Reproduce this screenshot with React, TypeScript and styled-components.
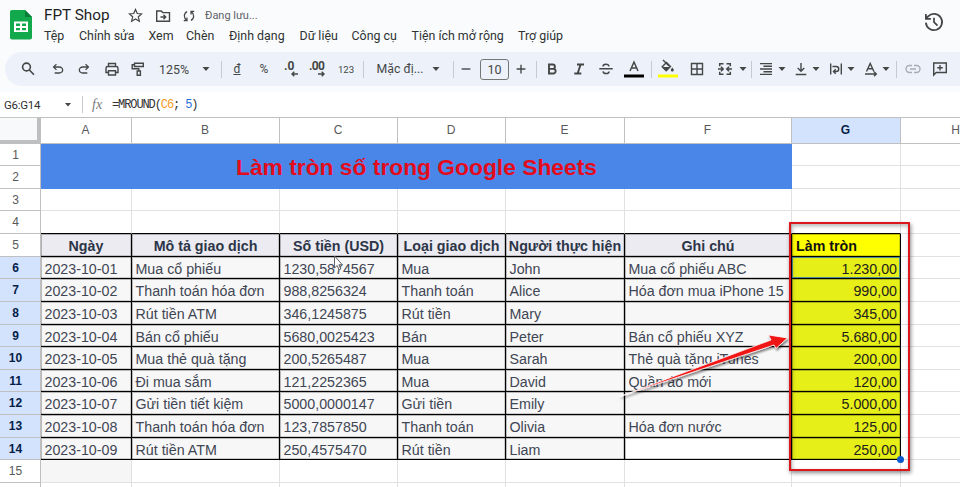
import React from 'react'
import styled, { createGlobalStyle } from 'styled-components'

const GlobalStyle = createGlobalStyle`
  * {
    box-sizing: border-box;
  }

  body {
    margin: 0;
    background: #fff;
    overflow: hidden;
  }
`

const Page = styled.div`
  width: 960px;
  height: 487px;
  overflow: hidden;
  background: #fff;
  color: #444746;
  font-family: Roboto, 'Liberation Sans', sans-serif;
`

const TopArea = styled.header`
  height: 92px;
  background: #f9fbfd;
`

const TitleBar = styled.div`
  display: flex;
  height: 52px;
  padding: 0 16px 0 10px;
`

const Logo = styled.svg`
  width: 22px;
  height: 30px;
  margin-top: 10px;
`

const TitleColumn = styled.div`
  flex: 1;
  margin-left: 12px;
`

const NameRow = styled.div`
  display: flex;
  align-items: center;
  height: 26px;
  padding-top: 5px;
`

const DocName = styled.div`
  width: 84px;
  margin-top: -2px;
  color: #1f1f1f;
  font-size: 15.3px;
  line-height: 20px;
`

const NameIcon = styled.span`
  display: flex;
  width: 27px;
`

const Saving = styled.span`
  margin-left: -4px;
  color: #5f6368;
  font-size: 11px;
`

const Menu = styled.nav`
  display: flex;
  height: 20px;
  line-height: 20px;
`

const MenuItem = styled.span<{ $width: number }>`
  width: ${({ $width }) => $width}px;
  flex: none;
  color: #303332;
  font-size: 12.4px;
  white-space: nowrap;
`

const HistoryIcon = styled.span`
  display: flex;
  align-items: center;
  height: 44px;
`

const Toolbar = styled.div`
  display: flex;
  align-items: center;
  height: 34px;
  margin-left: 5px;
  border-radius: 17px 0 0 17px;
  background: #edf2fa;
`

const Tool = styled.span<{ $gap: number; $width?: number; $size?: number; $faded?: boolean }>`
  display: flex;
  flex: none;
  justify-content: center;
  align-items: center;
  width: ${({ $width }) => $width ?? 16}px;
  margin-left: ${({ $gap }) => $gap}px;
  font-size: ${({ $size }) => $size ?? 12}px;
  white-space: nowrap;
  opacity: ${({ $faded }) => ($faded ? 0.4 : 1)};
`

const Caret = styled.span<{ $gap: number }>`
  flex: none;
  width: 8px;
  height: 4px;
  margin-left: ${({ $gap }) => $gap}px;
  background: #444746;
  clip-path: polygon(6% 0, 94% 0, 50% 100%);
`

const Divider = styled.span<{ $gap: number }>`
  flex: none;
  width: 1px;
  height: 17px;
  margin-left: ${({ $gap }) => $gap}px;
  background: #c7cad0;
`

const FontSize = styled.span`
  flex: none;
  width: 29px;
  height: 21px;
  margin-left: 9px;
  border: 1px solid #747775;
  border-radius: 3px;
  font-size: 12.5px;
  line-height: 19px;
  text-align: center;
`

const FormulaBar = styled.div`
  display: flex;
  align-items: center;
  height: 25px;
  padding-left: 4px;
`

const NameBox = styled.span`
  width: 51px;
  color: #303030;
  font-size: 11.5px;
  letter-spacing: -0.3px;
`

const Fx = styled.span`
  width: 20px;
  margin-left: 9px;
  color: #777a7d;
  font-family: 'Liberation Serif', serif;
  font-size: 14px;
  font-style: italic;
`

const Formula = styled.code`
  color: #333;
  font-family: 'Liberation Mono', monospace;
  font-size: 12px;
  letter-spacing: -1.1px;
  white-space: pre;
`

const Reference = styled.span`
  color: #f29b1d;
`

const NumberLiteral = styled.span`
  color: #2a6fd6;
`

const SheetArea = styled.main`
  position: relative;
`

const Sheet = styled.div`
  display: grid;
  grid-template-columns: 41px 91px 148px 118px 108px 119px 167px 109px 111px;
  grid-template-rows: 27px 22px 23px 22px 23px 23px 22px 23px 23px 22px 23px 22px 23px 23px 22px 23px 22px;
  font-family: 'Liberation Sans', sans-serif;
`

const Corner = styled.div`
  border-top: 1px solid #c4c7c5;
  border-right: 4px solid #bdbfc1;
  border-bottom: 4px solid #bdbfc1;
  background: #f8f9fa;
`

const ColumnHead = styled.div<{ $active: boolean }>`
  display: flex;
  justify-content: center;
  align-items: center;
  padding: 0 1px 1px 0;
  border: solid #c0c0c0;
  border-width: 1px 1px 1px 0;
  background: ${({ $active }) => ($active ? '#d3e3fd' : '#fff')};
  color: ${({ $active }) => ($active ? '#041e49' : '#575a5a')};
  font-size: 12px;
  font-weight: ${({ $active }) => ($active ? 700 : 400)};
`

const RowHead = styled.div<{ $active: boolean }>`
  display: flex;
  justify-content: center;
  align-items: center;
  padding-right: 9px;
  border: solid #c0c0c0;
  border-width: 0 1px 1px 0;
  background: ${({ $active }) => ($active ? '#d3e3fd' : '#fff')};
  color: ${({ $active }) => ($active ? '#041e49' : '#575a5a')};
  font-size: 12px;
  font-weight: ${({ $active }) => ($active ? 700 : 400)};
`

const Banner = styled.div`
  display: flex;
  grid-row: span 2;
  grid-column: span 6;
  justify-content: center;
  align-items: center;
  padding-top: 1px;
  background: #4a86e8;
  color: #e30b1c;
  font-size: 22.8px;
  font-weight: 700;
  white-space: nowrap;
`

const EmptyCell = styled.div<{ $ruled?: boolean; $tinted?: boolean }>`
  border: solid #e1e1e1;
  border-width: 0 1px 1px 0;
  border-bottom-color: ${({ $ruled }) => ($ruled ? '#000' : '#e1e1e1')};
  background: ${({ $tinted }) => ($tinted ? '#f6f6f6' : '#fff')};
`

// The soft second line keeps the black rules a little heavier than a hairline
const RuledCell = styled.div`
  border: solid #000;
  border-width: 0 1px 1px 0;
  box-shadow: inset -0.5px -0.5px 0 rgba(0, 0, 0, 0.35), inset 1px 1px 0 rgba(0, 0, 0, 0.25);
  font-size: 14.25px;
  line-height: 24px;
  white-space: nowrap;
`

const HeadCell = styled(RuledCell)<{ $yellow: boolean }>`
  padding-left: ${({ $yellow }) => ($yellow ? 4 : 0)}px;
  background: ${({ $yellow }) => ($yellow ? '#ffff00' : '#ebebf1')};
  color: ${({ $yellow }) => ($yellow ? '#111' : '#2d3548')};
  font-weight: 700;
  line-height: 25px;
  text-align: ${({ $yellow }) => ($yellow ? 'left' : 'center')};
`

const DataCell = styled(RuledCell)<{ $plain?: boolean }>`
  padding-left: 3.5px;
  background: ${({ $plain }) => ($plain ? '#fff' : '#f7f7f7')};
  color: #3f4654;
`

const ResultCell = styled(RuledCell)<{ $current: boolean }>`
  padding-right: 3px;
  background: #e7ef18;
  ${({ $current }) => $current && 'box-shadow: inset 0 0 0 1px #4f8f94;'}
  color: #1d211c;
  text-align: right;
`

// Drawn over the sheet: the red frame, the arrow and the pointer
const Callout = styled.div`
  position: absolute;
  top: 105px;
  left: 789px;
  width: 121px;
  height: 249px;
  border: 2.5px solid #dc161d;
  box-shadow: 1px 2px 4px rgba(0, 0, 0, 0.45), inset 1px 2px 4px rgba(0, 0, 0, 0.3);
`

const FillHandle = styled.div`
  position: absolute;
  top: 339px;
  left: 897px;
  width: 7px;
  height: 7px;
  border-radius: 50%;
  background: #0b57d0;
`

const Overlay = styled.svg`
  position: absolute;
  top: 0;
  left: 0;
  pointer-events: none;
`

const menuItems: [string, number][] = [
  ['Tệp', 35],
  ['Chỉnh sửa', 69.5],
  ['Xem', 37.5],
  ['Chèn', 43],
  ['Định dạng', 70.5],
  ['Dữ liệu', 52],
  ['Công cụ', 60],
  ['Tiện ích mở rộng', 106.5],
  ['Trợ giúp', 50],
]

const columns = ['A', 'B', 'C', 'D', 'E', 'F', 'G', 'H']

const headings = ['Ngày', 'Mô tả giao dịch', 'Số tiền (USD)', 'Loại giao dịch', 'Người thực hiện', 'Ghi chú', 'Làm tròn']

const rows = [
  ['2023-10-01', 'Mua cổ phiếu', '1230,5874567', 'Mua', 'John', 'Mua cổ phiếu ABC', '1.230,00'],
  ['2023-10-02', 'Thanh toán hóa đơn', '988,8256324', 'Thanh toán', 'Alice', 'Hóa đơn mua iPhone 15', '990,00'],
  ['2023-10-03', 'Rút tiền ATM', '346,1245875', 'Rút tiền', 'Mary', '', '345,00'],
  ['2023-10-04', 'Bán cổ phiếu', '5680,0025423', 'Bán', 'Peter', 'Bán cổ phiếu XYZ', '5.680,00'],
  ['2023-10-05', 'Mua thẻ quà tặng', '200,5265487', 'Mua', 'Sarah', 'Thẻ quà tặng iTunes', '200,00'],
  ['2023-10-06', 'Đi mua sắm', '121,2252365', 'Mua', 'David', 'Quần áo mới', '120,00'],
  ['2023-10-07', 'Gửi tiền tiết kiệm', '5000,0000147', 'Gửi tiền', 'Emily', '', '5.000,00'],
  ['2023-10-08', 'Thanh toán hóa đơn', '123,7857850', 'Thanh toán', 'Olivia', 'Hóa đơn nước', '125,00'],
  ['2023-10-09', 'Rút tiền ATM', '250,4575470', 'Rút tiền', 'Liam', '', '250,00'],
]

type IconProps = { children: React.ReactNode; size?: number; weight?: number }

const Icon: React.FC<IconProps> = ({ children, size = 16, weight = 1.4 }) => (
  <svg width={size} height={size} viewBox="0 0 16 16" fill="none" stroke="#444746" strokeWidth={weight}>
    {children}
  </svg>
)

const Solid: React.FC<{ d: string; size?: number }> = ({ d, size = 16 }) => (
  <svg width={size} height={size} viewBox="0 -960 960 960" fill="#444746">
    <path d={d} />
  </svg>
)

const SheetsLogo: React.FC = () => (
  <Logo viewBox="0 0 22 30">
    <path d="M2 0h13l7 7v20.500a2 2 0 0 1-2 2H2a2 2 0 0 1-2-2V2a2 2 0 0 1 2-2z" fill="#12a84c" />
    <path d="M15 0l7 7h-7z" fill="#0b7d3a" />
    <path d="M4 11.500h14v10.500H4z" fill="#fff" />
    <path d="M6 13.500h4v2.500H6zM12 13.500h4v2.500h-4zM6 18h4v2.300H6zM12 18h4v2.300h-4z" fill="#12a84c" />
  </Logo>
)

const DocumentHeader: React.FC = () => (
  <TitleBar>
    <SheetsLogo />
    <TitleColumn>
      <NameRow>
        <DocName>FPT Shop</DocName>
        <NameIcon>
          <Icon size={15} weight={1.3}>
            <path d="M8 1.500l1.900 4.400 4.700.4-3.600 3.100 1.100 4.700L8 11.600l-4.100 2.500L5 9.400 1.400 6.300l4.700-.4z" />
          </Icon>
        </NameIcon>
        <NameIcon>
          <Icon>
            <path d="M1.700 3h4.500l1.500 1.600h6.800v8.700H1.700zM5.500 9h5M8.500 6.800L10.700 9l-2.200 2.200" />
          </Icon>
        </NameIcon>
        <NameIcon>
          <Icon size={14}>
            <path d="M2 13.300h3.700V9.600M5.500 13C1.700 10.500 1.700 5 5.800 3M14 2.700h-3.700v3.700M10.500 3c3.800 2.500 3.800 8-.3 10" />
          </Icon>
        </NameIcon>
        <Saving>Đang lưu...</Saving>
      </NameRow>
      <Menu>
        {menuItems.map(([label, width]) => (
          <MenuItem key={label} $width={width}>
            {label}
          </MenuItem>
        ))}
      </Menu>
    </TitleColumn>
    <HistoryIcon>
      <Icon size={20} weight={1.4}>
        <path d="M1.500 8.500A6.500 6.500 0 1 0 3.300 3.500L1.700 5.200M1.500 1.500v4h4M8 4.500v3.700l2.800 2.700" />
      </Icon>
    </HistoryIcon>
  </TitleBar>
)

const ToolbarRow: React.FC = () => (
  <Toolbar>
    <Tool $gap={15}>
      <Icon weight={1.6}>
        <circle cx="6.500" cy="6" r="3.900" />
        <path d="M9.400 9l4.600 4.700" />
      </Icon>
    </Tool>
    <Tool $gap={14}>
      <Solid d="M280-200v-80h284q63 0 109.500-40T720-420q0-60-46.500-100T564-560H312l104 104-56 56-200-200 200-200 56 56-104 104h252q97 0 166.500 63T800-420q0 94-69.500 157T564-200H280Z" />
    </Tool>
    <Tool $gap={10}>
      <Solid d="M396-200q-97 0-166.500-63T160-420q0-94 69.500-157T396-640h252L544-744l56-56 200 200-200 200-56-56 104-104H396q-63 0-109.500 40T240-420q0 60 46.500 100T396-280h284v80H396Z" />
    </Tool>
    <Tool $gap={12}>
      <Icon>
        <path d="M4.500 5.500V2.500h7v3M4.500 11.500H2V7.200c0-1 .7-1.700 1.700-1.700h8.600c1 0 1.700.7 1.700 1.700v4.300h-2.500M4.500 9.700h7v4.300h-7z" />
      </Icon>
    </Tool>
    <Tool $gap={10}>
      <Icon>
        <path d="M4.500 2.200h8.800v3.300H4.500zM4.500 3.800H2.200v4h6.600v2M7.200 10h3.200v4.300H7.200z" />
      </Icon>
    </Tool>
    <Tool $gap={10} $width={36} $size={12.4}>
      125%
    </Tool>
    <Caret $gap={10} />
    <Divider $gap={11} />
    <Tool $gap={7}>
      <u>đ</u>
    </Tool>
    <Tool $gap={11}>%</Tool>
    <Tool $gap={11}>
      <svg width="16" height="18" viewBox="0 0 16 18">
        <text x="1" y="10" fontSize="12" fontWeight="700" fill="#444746">
          .0
        </text>
        <path d="M15 14H9M11.300 11.700L9 14l2.300 2.300" fill="none" stroke="#444746" strokeWidth="1.400" />
      </svg>
    </Tool>
    <Tool $gap={10} $width={18}>
      <svg width="18" height="18" viewBox="0 0 18 18">
        <text x="0" y="10" fontSize="12" fontWeight="700" fill="#444746" textLength="16">
          .00
        </text>
        <path d="M9 14h6M12.700 11.700L15 14l-2.300 2.300" fill="none" stroke="#444746" strokeWidth="1.400" />
      </svg>
    </Tool>
    <Tool $gap={9} $width={20} $size={9.6}>
      123
    </Tool>
    <Divider $gap={7} />
    <Tool $gap={11} $width={50} $size={12.3}>
      Mặc đị...
    </Tool>
    <Caret $gap={7} />
    <Divider $gap={13} />
    <Tool $gap={7} $width={10}>
      <Icon size={10} weight={2.2}>
        <path d="M1 8h14" />
      </Icon>
    </Tool>
    <FontSize>10</FontSize>
    <Tool $gap={7} $width={10}>
      <Icon size={10} weight={2.2}>
        <path d="M1 8h14M8 1v14" />
      </Icon>
    </Tool>
    <Divider $gap={10} />
    <Tool $gap={7}>
      <Icon weight={1.9}>
        <path d="M5 3.500h3.700a2.200 2.200 0 0 1 0 4.400H5zM5 7.900h4.300a2.300 2.300 0 0 1 0 4.600H5z" />
      </Icon>
    </Tool>
    <Tool $gap={11}>
      <Icon weight={1.9}>
        <path d="M6 3.500h7M3.300 12.500h7M9.600 3.500l-3 9" />
      </Icon>
    </Tool>
    <Tool $gap={11}>
      <Icon weight={1.5}>
        <path d="M1.300 7.700h13.400M11 5.300C10.500 2.600 5 2.600 5 5.500M5 10.300c.5 3 6 3 6.100.2" />
      </Icon>
    </Tool>
    <Tool $gap={10} $width={20}>
      <svg width="20" height="20" viewBox="0 0 20 20">
        <path d="M6 12l4-9 4 9M7.400 9h5.200" fill="none" stroke="#444746" strokeWidth="1.500" />
        <path d="M0 15.500h20v3H0z" fill="#000" />
      </svg>
    </Tool>
    <Divider $gap={7} />
    <Tool $gap={6} $width={20}>
      <svg width="20" height="20" viewBox="0 0 20 20">
        <path d="M5 1l6 6M8.500 3.500l4 4-4.300 4.200-4-4z" fill="none" stroke="#444746" strokeWidth="1.400" />
        <path d="M4.500 8h7.700l-4 4zM14.300 8.500s-1.500 1.700-1.500 2.500a1.500 1.500 0 0 0 3 0c0-.8-1.500-2.500-1.500-2.500z" fill="#444746" />
        <path d="M0 15.500h20v3H0z" fill="#ff0" />
      </svg>
    </Tool>
    <Tool $gap={11}>
      <Icon>
        <path d="M2.500 2.500h11v11h-11zM8 2.500v11M2.500 8h11" />
      </Icon>
    </Tool>
    <Tool $gap={12}>
      <Icon weight={1.5}>
        <path d="M6.500 2.700H2.700v2.500M9.500 2.700h3.800v2.500M6.500 13.300H2.700v-2.500M9.500 13.300h3.800v-2.500M1 8h5M4 5.800L6.200 8 4 10.200M15 8h-5M12 5.800L9.800 8l2.200 2.200" />
      </Icon>
    </Tool>
    <Caret $gap={6} />
    <Divider $gap={4} />
    <Tool $gap={6}>
      <Icon>
        <path d="M2 2.600h12M5.500 5.300H14M2 8h12M5.500 10.700H14M2 13.400h12" />
      </Icon>
    </Tool>
    <Caret $gap={4} />
    <Tool $gap={7}>
      <Icon>
        <path d="M8 2v8M4.700 7L8 10.300 11.300 7M2.700 13.500h10.600" />
      </Icon>
    </Tool>
    <Caret $gap={3} />
    <Tool $gap={8}>
      <Icon>
        <path d="M2.700 2.500v11M13.300 2.500v11M4.500 5.500h3.700c3.400 0 3.400 5 0 5H5.800M7.700 8.300l-2.200 2.200 2.200 2.200" />
      </Icon>
    </Tool>
    <Caret $gap={3} />
    <Tool $gap={8}>
      <Icon>
        <path d="M3.500 10.500l3.700-8 3.700 8M4.800 7.800h4.800M2 13h11M11 10.800l2.300 2.200L11 15.200" />
      </Icon>
    </Tool>
    <Caret $gap={3} />
    <Divider $gap={6} />
    <Tool $gap={8} $faded>
      <Icon>
        <path d="M7 4.500H4.500a3.500 3.500 0 0 0 0 7H7M9 4.500h2.500a3.500 3.500 0 0 1 0 7H9M5 8h6" />
      </Icon>
    </Tool>
    <Tool $gap={11}>
      <Icon>
        <path d="M1.700 14V2h12.600v9.500H4.200zM8 4v5.500M5.200 6.700h5.600" />
      </Icon>
    </Tool>
  </Toolbar>
)

const App: React.FC = () => (
  <Page>
    <GlobalStyle />
    <TopArea>
      <DocumentHeader />
      <ToolbarRow />
    </TopArea>
    <FormulaBar>
      <NameBox>G6:G14</NameBox>
      <Caret $gap={9} />
      <Divider $gap={10} />
      <Fx>fx</Fx>
      <Formula>
        =MROUND(<Reference>C6</Reference>; <NumberLiteral>5</NumberLiteral>)
      </Formula>
    </FormulaBar>
    <SheetArea>
      <Sheet>
        <Corner />
        {columns.map((name) => (
          <ColumnHead key={name} $active={name === 'G'}>
            {name}
          </ColumnHead>
        ))}

        <RowHead $active={false}>1</RowHead>
        <Banner>Làm tròn số trong Google Sheets</Banner>
        <EmptyCell />
        <EmptyCell />
        <RowHead $active={false}>2</RowHead>
        <EmptyCell />
        <EmptyCell />

        {[3, 4].map((row) => (
          <React.Fragment key={row}>
            <RowHead $active={false}>{row}</RowHead>
            {columns.map((name) => (
              <EmptyCell key={name} $ruled={row === 4 && name !== 'H'} />
            ))}
          </React.Fragment>
        ))}

        <RowHead $active={false}>5</RowHead>
        {headings.map((heading, index) => (
          <HeadCell key={heading} $yellow={index === 6}>
            {heading}
          </HeadCell>
        ))}
        <EmptyCell />

        {rows.map((cells, rowIndex) => (
          <React.Fragment key={cells[0]}>
            <RowHead $active>{rowIndex + 6}</RowHead>
            {cells.slice(0, 6).map((value, index) => (
              <DataCell key={columns[index]} $plain={rowIndex === 8 && index === 5}>
                {value}
              </DataCell>
            ))}
            <ResultCell $current={rowIndex === 0}>{cells[6]}</ResultCell>
            <EmptyCell />
          </React.Fragment>
        ))}

        {[15, 16].map((row) => (
          <React.Fragment key={row}>
            <RowHead $active={false}>{row === 15 ? row : ''}</RowHead>
            {columns.map((name) => (
              <EmptyCell key={name} $tinted={row === 15 && name === 'A'} />
            ))}
          </React.Fragment>
        ))}
      </Sheet>
      <Callout />
      <FillHandle />
      <Overlay width="960" height="370" viewBox="0 117 960 370">
        <defs>
          <filter id="arrowShadow" x="-10%" y="-20%" width="120%" height="150%">
            <feDropShadow dx="1" dy="2" stdDeviation="1.200" floodOpacity="0.500" />
          </filter>
        </defs>
        <path
          d="M620 396.500L771 340L768.500 335L787.500 338L776 348.500L774 345z"
          fill="#f01414"
          stroke="#fff"
          strokeWidth="0.800"
          filter="url(#arrowShadow)"
        />
        <path d="M334.500 256v12l2.700-2.500 1.900 4.300 1.700-.8-1.900-4.200h3.500z" fill="#fff" stroke="#555" strokeWidth="0.900" />
      </Overlay>
    </SheetArea>
  </Page>
)

export default App
